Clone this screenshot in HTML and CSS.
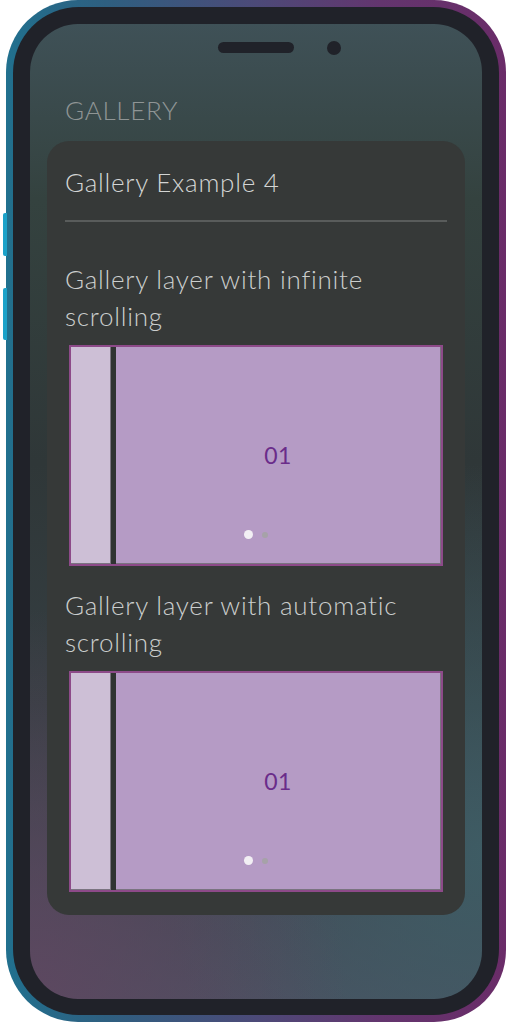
FILE: index.html
```html
<!DOCTYPE html>
<html>
<head>
<meta charset="utf-8">
<link rel="stylesheet" href="styles.css">
</head>
<body>
<div class="phone">
  <span class="side-btn side-btn-1"></span>
  <span class="side-btn side-btn-2"></span>
  <div class="bezel">
    <div class="screen">
      <span class="speaker"></span>
      <span class="camera"></span>
      <h1 class="page-title">GALLERY</h1>
      <div class="card">
        <h2 class="card-title">Gallery Example 4</h2>
        <hr class="divider">
        <h3 class="section-title first">Gallery layer with infinite scrolling</h3>
        <div class="gallery">
          <div class="slide slide-prev"></div>
          <div class="slide slide-main"><span class="slide-num">01</span></div>
          <div class="dots"><span class="dot active"></span><span class="dot"></span></div>
        </div>
        <h3 class="section-title">Gallery layer with automatic scrolling</h3>
        <div class="gallery">
          <div class="slide slide-prev"></div>
          <div class="slide slide-main"><span class="slide-num">01</span></div>
          <div class="dots"><span class="dot active"></span><span class="dot"></span></div>
        </div>
      </div>
    </div>
  </div>
</div>
</body>
</html>
```

FILE: styles.css
```css
* { box-sizing: border-box; }
html, body { margin: 0; padding: 0; background: #ffffff; }
body {
  width: 512px;
  height: 1024px;
  overflow: hidden;
  font-family: Lato, "Open Sans", sans-serif;
}
.phone {
  position: relative;
  margin-left: 6px;
  width: 500px;
  height: 1022px;
  padding: 7px;
  border-radius: 72px;
  background: linear-gradient(90deg, #21708e 0%, #2e5f80 20%, #4c4a78 50%, #63356e 75%, #6a2c68 100%);
}
.side-btn {
  position: absolute;
  left: -3px;
  width: 4px;
  background: #1ba2c9;
  border-radius: 2px 0 0 2px;
}
.side-btn-1 { top: 213px; height: 43px; }
.side-btn-2 { top: 288px; height: 52px; }
.bezel {
  width: 100%;
  height: 100%;
  padding: 17px 17px 16px 17px;
  border-radius: 66px;
  background: #202229;
}
.screen {
  position: relative;
  width: 100%;
  height: 100%;
  border-radius: 48px;
  padding: 0 17px;
  overflow: hidden;
  background:
    radial-gradient(ellipse 70% 40% at 0% 100%, rgba(96, 70, 96, 0.85) 0%, rgba(96, 70, 96, 0) 100%),
    radial-gradient(ellipse 70% 40% at 100% 85%, rgba(62, 94, 102, 0.9) 0%, rgba(62, 94, 102, 0) 100%),
    linear-gradient(180deg, #3f5157 0%, #34423f 18%, #2f3738 45%, #353e42 70%, #4a5060 100%);
  display: flex;
  flex-direction: column;
}
.speaker {
  position: absolute;
  left: 188px;
  top: 18px;
  width: 76px;
  height: 11px;
  border-radius: 6px;
  background: #202229;
}
.camera {
  position: absolute;
  left: 297px;
  top: 17px;
  width: 14px;
  height: 14px;
  border-radius: 50%;
  background: #202229;
}
.page-title {
  margin: 68px 0 0 18px;
  font-size: 26px;
  line-height: 37px;
  font-weight: 300;
  letter-spacing: 0.7px;
  color: #8f9595;
}
.card {
  margin-top: 12px;
  padding: 23px 18px 23px 18px;
  border-radius: 22px;
  background: #363938;
}
.card-title {
  margin: 0;
  font-size: 26px;
  line-height: 37px;
  font-weight: 300;
  letter-spacing: 0.75px;
  color: #d3d5d4;
}
.divider {
  margin: 19px 0 0 0;
  border: 0;
  height: 2px;
  background: #595c5b;
}
.section-title {
  margin: 21px 0 10px 0;
  font-size: 26px;
  line-height: 37px;
  font-weight: 300;
  letter-spacing: 0.75px;
  color: #cbcecd;
}
.section-title.first { margin-top: 39px; }
.gallery {
  position: relative;
  margin: 0 4px;
  height: 221px;
  border: 2px solid #8d4a89;
  display: flex;
  background: #2f3331;
}
.slide {
  height: 100%;
  border: 1px solid #7a7480;
  border-top: 0;
  border-left: 0;
}
.slide-prev {
  width: 40px;
  background: #cdbfd6;
}
.slide-main {
  flex: 1;
  margin-left: 5px;
  background: #b59bc5;
  display: flex;
  align-items: center;
  justify-content: center;
}
.slide-num {
  font-size: 23px;
  font-weight: 400;
  letter-spacing: 0.5px;
  color: #6a2c8a;
}
.dots {
  position: absolute;
  left: 0;
  right: 0;
  bottom: 25px;
  display: flex;
  justify-content: center;
  align-items: center;
  gap: 9px;
}
.dot {
  width: 6px;
  height: 6px;
  border-radius: 50%;
  background: #a6a2a8;
}
.dot.active {
  width: 9px;
  height: 9px;
  background: #f2eff4;
}
```
